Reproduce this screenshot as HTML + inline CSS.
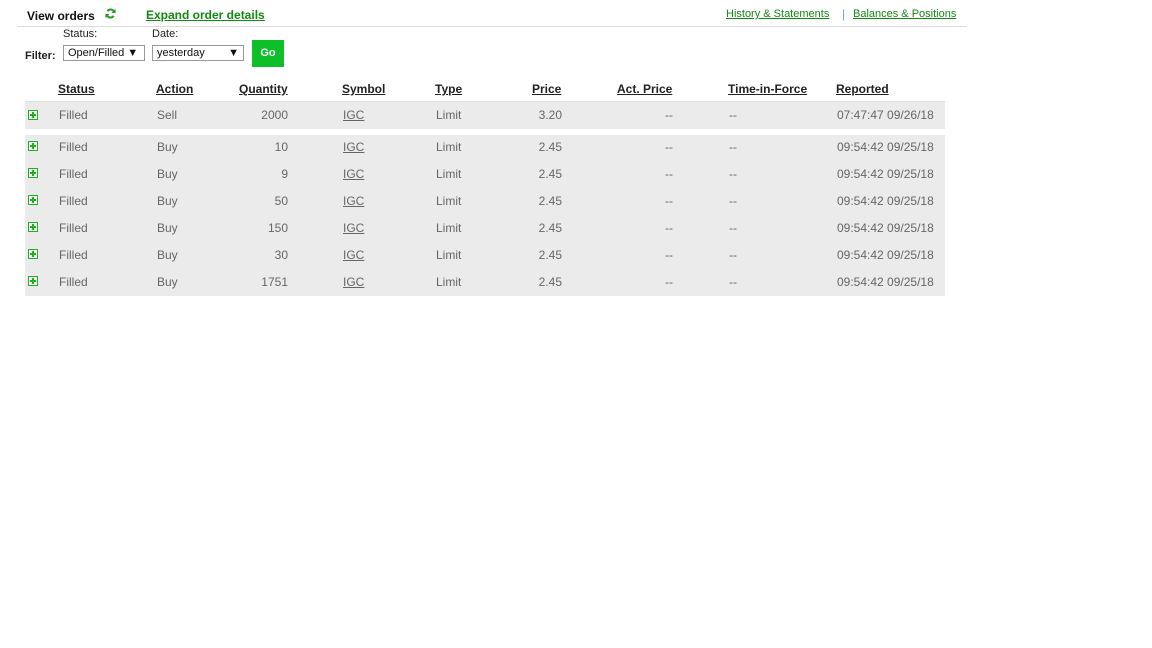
<!DOCTYPE html>
<html><head><style>
body{margin:0;width:1152px;height:648px;background:#fff;font-family:"Liberation Sans",Arial,sans-serif;position:relative;overflow:hidden}
.a{position:absolute;white-space:nowrap}
.hd{font-size:12px;font-weight:bold;color:#222;text-decoration:underline;top:82px}
.row{position:absolute;left:25px;width:920px;background:#ebebeb}
.c{position:absolute;font-size:12px;color:#666;white-space:nowrap}
.plus{position:absolute;width:8px;height:8px;border:1px solid #1db31d;background:#fff}
.plus:before{content:"";position:absolute;left:1px;top:3px;width:6px;height:2px;background:#1db31d}
.plus:after{content:"";position:absolute;left:3px;top:1px;width:2px;height:6px;background:#1db31d}
.r{text-align:right}
</style></head><body>
<div class="a" style="left:27px;top:9px;font-size:12px;font-weight:bold;color:#111">View orders</div>
<svg class="a" style="left:105px;top:8px" width="11" height="11" viewBox="0 0 12 12"><path d="M10 4.5A4.2 4.2 0 0 0 2.5 3.5M2 7.5A4.2 4.2 0 0 0 9.5 8.5" stroke="#2a9a2a" stroke-width="2.2" fill="none"/><path d="M11.5 1v4.5H7z M0.5 11V6.5H5z" fill="#2a9a2a"/></svg>
<div class="a" style="left:146px;top:8px;font-size:12px;font-weight:bold;color:#118a11;text-decoration:underline">Expand order details</div>
<div class="a" style="left:726px;top:8px;font-size:11px;color:#118a11;text-decoration:underline">History &amp; Statements</div>
<div class="a" style="left:842px;top:7px;font-size:12px;color:#6aa7e0">|</div>
<div class="a" style="left:853px;top:8px;font-size:11px;color:#118a11;text-decoration:underline">Balances &amp; Positions</div>
<div class="a" style="left:17px;top:26px;width:950px;height:1px;background:#ddd"></div>
<div class="a" style="left:63px;top:28px;font-size:11px;color:#222">Status:</div>
<div class="a" style="left:152px;top:28px;font-size:11px;color:#222">Date:</div>
<div class="a" style="left:25px;top:50px;font-size:11px;font-weight:bold;color:#222">Filter:</div>
<div class="a" style="left:63px;top:45px;height:14px;border:1px solid #999;font-size:11px;color:#111;line-height:14px;padding-left:4px;width:76px">Open/Filled ▼</div>
<div class="a" style="left:152px;top:45px;width:86px;height:14px;border:1px solid #999;font-size:11px;color:#111;line-height:14px;padding-left:4px">yesterday<span style="position:absolute;right:4px">▼</span></div>
<div class="a" style="left:252px;top:40px;width:32px;height:27px;background:#0dc02a;color:#fff;font-size:11px;font-weight:bold;text-align:center;line-height:27px">Go</div>
<div class="a hd" style="left:58px">Status</div>
<div class="a hd" style="left:156px">Action</div>
<div class="a hd" style="left:239px">Quantity</div>
<div class="a hd" style="left:342px">Symbol</div>
<div class="a hd" style="left:435px">Type</div>
<div class="a hd" style="left:532px">Price</div>
<div class="a hd" style="left:617px">Act. Price</div>
<div class="a hd" style="left:728px">Time-in-Force</div>
<div class="a hd" style="left:836px">Reported</div>
<div class="row" style="top:101px;height:27px;border-top:1px solid #ddd"></div>
<div class="row" style="top:135px;height:161px"></div>
<div class="a" style="left:0;top:0">
<div class="plus" style="left:28px;top:110px"></div><div class="c" style="left:59px;top:108px">Filled</div><div class="c" style="left:157px;top:108px">Sell</div><div class="c r" style="left:228px;width:60px;top:108px">2000</div><div class="c" style="left:343px;top:108px;text-decoration:underline">IGC</div><div class="c" style="left:436px;top:108px">Limit</div><div class="c r" style="left:502px;width:60px;top:108px">3.20</div><div class="c r" style="left:613px;width:60px;top:108px">--</div><div class="c" style="left:729px;top:108px">--</div><div class="c" style="left:837px;top:108px">07:47:47 09/26/18</div>
<div class="plus" style="left:28px;top:141px"></div><div class="c" style="left:59px;top:140px">Filled</div><div class="c" style="left:157px;top:140px">Buy</div><div class="c r" style="left:228px;width:60px;top:140px">10</div><div class="c" style="left:343px;top:140px;text-decoration:underline">IGC</div><div class="c" style="left:436px;top:140px">Limit</div><div class="c r" style="left:502px;width:60px;top:140px">2.45</div><div class="c r" style="left:613px;width:60px;top:140px">--</div><div class="c" style="left:729px;top:140px">--</div><div class="c" style="left:837px;top:140px">09:54:42 09/25/18</div>
<div class="plus" style="left:28px;top:168px"></div><div class="c" style="left:59px;top:167px">Filled</div><div class="c" style="left:157px;top:167px">Buy</div><div class="c r" style="left:228px;width:60px;top:167px">9</div><div class="c" style="left:343px;top:167px;text-decoration:underline">IGC</div><div class="c" style="left:436px;top:167px">Limit</div><div class="c r" style="left:502px;width:60px;top:167px">2.45</div><div class="c r" style="left:613px;width:60px;top:167px">--</div><div class="c" style="left:729px;top:167px">--</div><div class="c" style="left:837px;top:167px">09:54:42 09/25/18</div>
<div class="plus" style="left:28px;top:195px"></div><div class="c" style="left:59px;top:194px">Filled</div><div class="c" style="left:157px;top:194px">Buy</div><div class="c r" style="left:228px;width:60px;top:194px">50</div><div class="c" style="left:343px;top:194px;text-decoration:underline">IGC</div><div class="c" style="left:436px;top:194px">Limit</div><div class="c r" style="left:502px;width:60px;top:194px">2.45</div><div class="c r" style="left:613px;width:60px;top:194px">--</div><div class="c" style="left:729px;top:194px">--</div><div class="c" style="left:837px;top:194px">09:54:42 09/25/18</div>
<div class="plus" style="left:28px;top:222px"></div><div class="c" style="left:59px;top:221px">Filled</div><div class="c" style="left:157px;top:221px">Buy</div><div class="c r" style="left:228px;width:60px;top:221px">150</div><div class="c" style="left:343px;top:221px;text-decoration:underline">IGC</div><div class="c" style="left:436px;top:221px">Limit</div><div class="c r" style="left:502px;width:60px;top:221px">2.45</div><div class="c r" style="left:613px;width:60px;top:221px">--</div><div class="c" style="left:729px;top:221px">--</div><div class="c" style="left:837px;top:221px">09:54:42 09/25/18</div>
<div class="plus" style="left:28px;top:249px"></div><div class="c" style="left:59px;top:248px">Filled</div><div class="c" style="left:157px;top:248px">Buy</div><div class="c r" style="left:228px;width:60px;top:248px">30</div><div class="c" style="left:343px;top:248px;text-decoration:underline">IGC</div><div class="c" style="left:436px;top:248px">Limit</div><div class="c r" style="left:502px;width:60px;top:248px">2.45</div><div class="c r" style="left:613px;width:60px;top:248px">--</div><div class="c" style="left:729px;top:248px">--</div><div class="c" style="left:837px;top:248px">09:54:42 09/25/18</div>
<div class="plus" style="left:28px;top:276px"></div><div class="c" style="left:59px;top:275px">Filled</div><div class="c" style="left:157px;top:275px">Buy</div><div class="c r" style="left:228px;width:60px;top:275px">1751</div><div class="c" style="left:343px;top:275px;text-decoration:underline">IGC</div><div class="c" style="left:436px;top:275px">Limit</div><div class="c r" style="left:502px;width:60px;top:275px">2.45</div><div class="c r" style="left:613px;width:60px;top:275px">--</div><div class="c" style="left:729px;top:275px">--</div><div class="c" style="left:837px;top:275px">09:54:42 09/25/18</div>
</div>
</body></html>
